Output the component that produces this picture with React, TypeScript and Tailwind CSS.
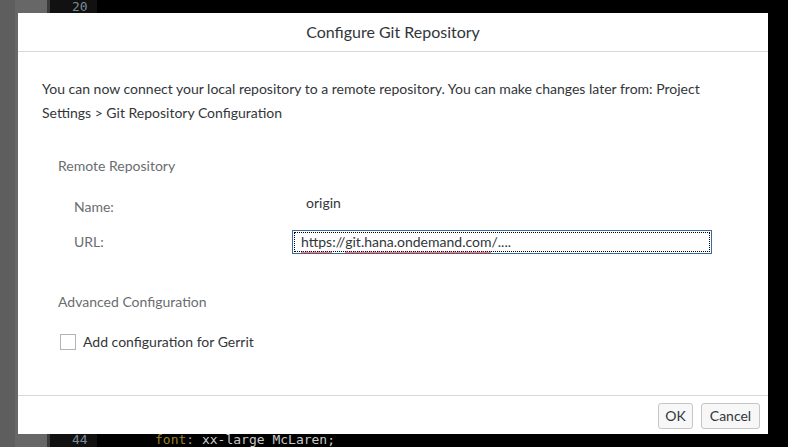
function Squiggle({ children }: { children: React.ReactNode }) {
  return (
    <span className="relative inline-block">
      {children}
      <svg className="absolute -bottom-[3px] left-0 h-[3px] w-full" preserveAspectRatio="none">
        <defs>
          <pattern id="wave" width="4" height="3" patternUnits="userSpaceOnUse">
            <path d="M0 2.5 L2 0.5 L4 2.5" fill="none" stroke="#e00000" strokeWidth="1" />
          </pattern>
        </defs>
        <rect width="100%" height="3" fill="url(#wave)" />
      </svg>
    </span>
  );
}

export default function App() {
  return (
    <div className="relative h-[447px] w-[788px] overflow-hidden bg-black font-['Lato',sans-serif]">
      {/* editor behind the dialog */}
      <div className="flex h-full">
        <div className="flex w-[47px]">
          <div className="w-[15px] bg-[#5e5e5e]" />
          <div className="flex-1 bg-[#676767]" />
        </div>
        <div className="w-[3px] bg-[#3a3a3a]" />
        <div className="flex w-[47px] flex-col justify-between bg-[#111111] font-['DejaVu_Sans_Mono',monospace] text-[13px] leading-[13px] text-[#7b8a99]">
          <div className="pl-[22px]">20</div>
          <div className="mb-[1px] pl-[22px]">44</div>
        </div>
        <div className="flex flex-1 flex-col justify-end font-['DejaVu_Sans_Mono',monospace] text-[13px] leading-[13px]">
          <div className="mb-[1px] pl-[58px] text-[#c8c8c8]">
            <span className="text-[#9a8420]">font</span>
            <span className="text-[#9a9a9a]">:</span> xx-large McLaren;
          </div>
        </div>
      </div>

      {/* dialog */}
      <div className="absolute left-[18px] top-[13px] flex h-[421px] w-[750px] flex-col bg-white text-[#32363a]">
        <div className="flex h-[39px] shrink-0 items-center justify-center border-b border-[#d9d9d9] text-[16px]">
          Configure Git Repository
        </div>

        <div className="flex-1 px-[24px] pt-[25px]">
          <p className="text-[14px] leading-[24px]">
            You can now connect your local repository to a remote repository. You can make changes later from: Project
            Settings &gt; Git Repository Configuration
          </p>

          <div className="mt-[31px] pl-[16px] text-[14px] leading-[20px] text-[#6a6d70]">Remote Repository</div>

          <div className="mt-[21px] grid grid-cols-[218px_420px] items-center gap-y-[13px] pl-[32px] text-[14px]">
            <div className="leading-[20px] text-[#6a6d70]">Name:</div>
            <div className="-mt-[8px] pl-[14px] leading-[20px] text-[#32363a]">origin</div>
            <div className="leading-[20px] text-[#6a6d70]">URL:</div>
            <div className="flex h-[24px] items-center border border-[#3a6a99] p-[1px]">
              <div className="flex h-full w-full items-center whitespace-pre border border-dotted border-black pl-[6px] leading-[18px]">
                <Squiggle>https</Squiggle>
                ://
                <Squiggle>git.hana.ondemand.com</Squiggle>
                /....
              </div>
            </div>
          </div>

          <div className="mt-[38px] pl-[16px] text-[14px] leading-[20px] text-[#6a6d70]">Advanced Configuration</div>

          <div className="mt-[20px] flex items-center gap-[7px] pl-[18px] text-[14px]">
            <div className="h-[16px] w-[16px] border border-[#b3b3b3] bg-white" />
            <span className="leading-[20px] text-[#32363a]">Add configuration for Gerrit</span>
          </div>
        </div>

        <div className="flex h-[39px] shrink-0 items-center justify-end gap-[8px] border-t border-[#d9d9d9] pr-[8px] pt-[1px] text-[14px]">
          <button className="h-[26px] w-[35px] rounded-[3px] border border-[#c6c6c6] bg-[#f7f7f7] text-[#32363a]">OK</button>
          <button className="h-[26px] w-[59px] rounded-[3px] border border-[#c6c6c6] bg-[#f7f7f7] text-[#32363a]">Cancel</button>
        </div>
      </div>
    </div>
  );
}
